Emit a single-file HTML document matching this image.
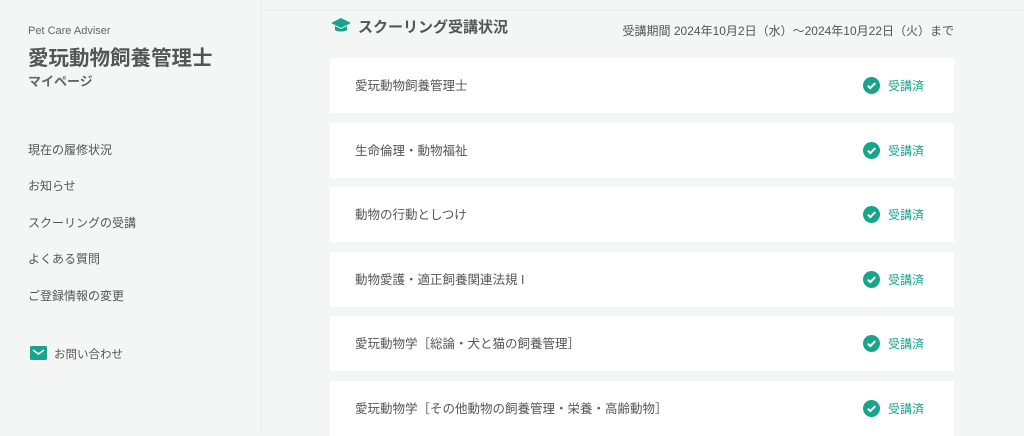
<!DOCTYPE html>
<html><head><meta charset="utf-8"><style>
*{margin:0;padding:0;box-sizing:border-box}
body{width:1024px;height:433px;overflow:hidden;background:#f4f6f6;font-family:"Liberation Sans","Noto Sans CJK JP",sans-serif;color:#555;position:relative}
.side{position:absolute;left:0;top:0;width:262px;height:433px;border-right:1px solid #e8ebeb}
.pca{position:absolute;left:28px;top:25px;font-size:11px;color:#666}
.t1{position:absolute;left:28px;top:41px;font-size:20.5px;font-weight:bold;color:#555}
.t2{position:absolute;left:28px;top:71px;font-size:13px;font-weight:bold;color:#666}
.nav{position:absolute;left:28px;font-size:12px;color:#555}
.topline{position:absolute;left:263px;top:10px;width:761px;height:1px;background:#e8ebeb}
.h{position:absolute;left:358px;top:16px;font-size:15px;font-weight:bold;color:#555}
.per{position:absolute;right:70px;top:22px;font-size:12px;color:#555;white-space:nowrap}
.card{position:absolute;left:330px;width:624px;height:55px;background:#fff}
.card .n{position:absolute;left:25px;top:17px;font-size:12.5px;color:#555}
.card .s{position:absolute;left:533px;top:19px;font-size:12px;color:#1aa38c;display:flex;align-items:center;gap:8px}
</style></head><body>
<div class="side">
<div class="pca">Pet Care Adviser</div>
<div class="t1">愛玩動物飼養管理士</div>
<div class="t2">マイページ</div>
<div class="nav" style="top:141px">現在の履修状況</div>
<div class="nav" style="top:177px">お知らせ</div>
<div class="nav" style="top:214px">スクーリングの受講</div>
<div class="nav" style="top:250px">よくある質問</div>
<div class="nav" style="top:287px">ご登録情報の変更</div>
<svg style="position:absolute;left:30px;top:346px" width="17" height="14" viewBox="0 0 17 14"><rect width="17" height="14" rx="1.5" fill="#1aa38c"/><path d="M3 4l5.5 4 5.5-4" stroke="#fff" stroke-width="1.5" fill="none"/></svg>
<div class="nav" style="top:346px;left:54px;font-size:11.5px">お問い合わせ</div>
</div>
<div class="topline"></div>
<svg style="position:absolute;left:331px;top:17px" width="20" height="16" viewBox="0 0 20 16"><path d="M10 1L0 6l10 5 10-5z" fill="#1aa38c"/><path d="M4 9v4c2 2 10 2 12 0V9l-6 3z" fill="#1aa38c"/></svg>
<div class="h">スクーリング受講状況</div>
<div class="per">受講期間 2024年10月2日（水）～2024年10月22日（火）まで</div>

<div class="card" style="top:58px"><div class="n">愛玩動物飼養管理士</div><div class="s"><svg width="17" height="17" viewBox="0 0 17 17"><circle cx="8.5" cy="8.5" r="8.5" fill="#1aa38c"/><path d="M4.8 8.7l2.5 2.4 5-5" stroke="#fff" stroke-width="2" fill="none"/></svg>受講済</div></div>
<div class="card" style="top:123px"><div class="n">生命倫理・動物福祉</div><div class="s"><svg width="17" height="17" viewBox="0 0 17 17"><circle cx="8.5" cy="8.5" r="8.5" fill="#1aa38c"/><path d="M4.8 8.7l2.5 2.4 5-5" stroke="#fff" stroke-width="2" fill="none"/></svg>受講済</div></div>
<div class="card" style="top:187px"><div class="n">動物の行動としつけ</div><div class="s"><svg width="17" height="17" viewBox="0 0 17 17"><circle cx="8.5" cy="8.5" r="8.5" fill="#1aa38c"/><path d="M4.8 8.7l2.5 2.4 5-5" stroke="#fff" stroke-width="2" fill="none"/></svg>受講済</div></div>
<div class="card" style="top:252px"><div class="n">動物愛護・適正飼養関連法規 I</div><div class="s"><svg width="17" height="17" viewBox="0 0 17 17"><circle cx="8.5" cy="8.5" r="8.5" fill="#1aa38c"/><path d="M4.8 8.7l2.5 2.4 5-5" stroke="#fff" stroke-width="2" fill="none"/></svg>受講済</div></div>
<div class="card" style="top:316px"><div class="n">愛玩動物学［総論・犬と猫の飼養管理］</div><div class="s"><svg width="17" height="17" viewBox="0 0 17 17"><circle cx="8.5" cy="8.5" r="8.5" fill="#1aa38c"/><path d="M4.8 8.7l2.5 2.4 5-5" stroke="#fff" stroke-width="2" fill="none"/></svg>受講済</div></div>
<div class="card" style="top:381px"><div class="n">愛玩動物学［その他動物の飼養管理・栄養・高齢動物］</div><div class="s"><svg width="17" height="17" viewBox="0 0 17 17"><circle cx="8.5" cy="8.5" r="8.5" fill="#1aa38c"/><path d="M4.8 8.7l2.5 2.4 5-5" stroke="#fff" stroke-width="2" fill="none"/></svg>受講済</div></div>
</body></html>
